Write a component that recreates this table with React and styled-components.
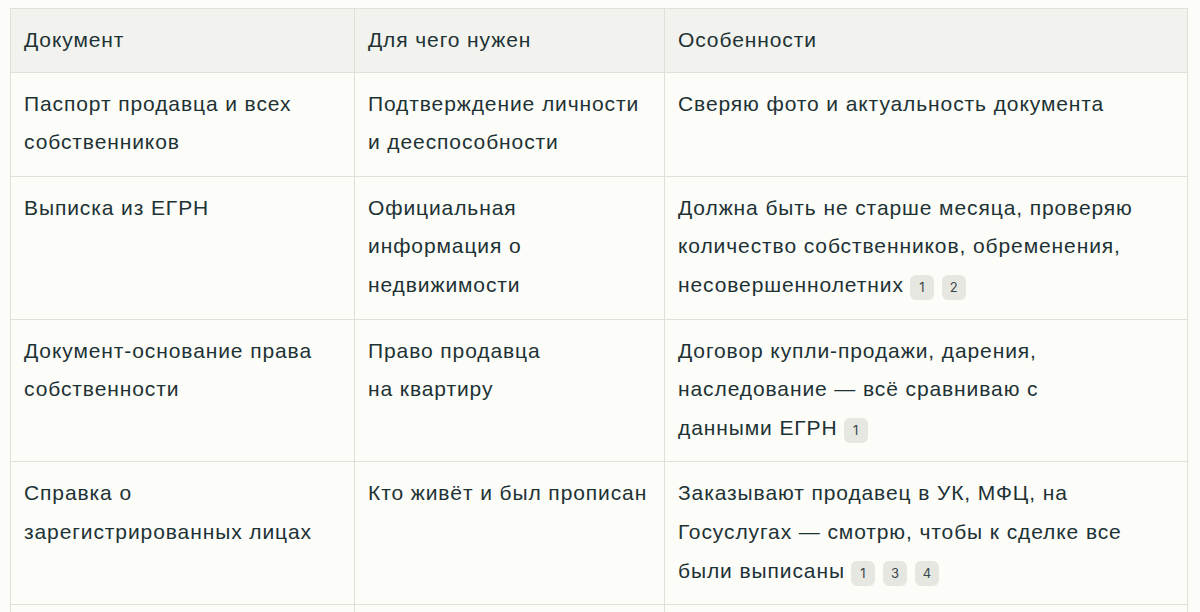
import styled, { createGlobalStyle } from "styled-components";

const rows = [
  {
    doc: "Паспорт продавца и всех собственников",
    why: "Подтверждение личности и дееспособности",
    note: "Сверяю фото и актуальность документа",
    tail: "",
    refs: [],
  },
  {
    doc: "Выписка из ЕГРН",
    why: "Официальная информация о недвижимости",
    note: "Должна быть не старше месяца, проверяю количество собственников, обременения, ",
    tail: "несовершеннолетних",
    refs: [1, 2],
  },
  {
    doc: "Документ-основание права собственности",
    why: (
      <>
        Право продавца
        <br />
        на квартиру
      </>
    ),
    note: "Договор купли-продажи, дарения, наследование — всё сравниваю с ",
    tail: "данными ЕГРН",
    refs: [1],
  },
  {
    doc: "Справка о зарегистрированных лицах",
    why: "Кто живёт и был прописан",
    note: "Заказывают продавец в УК, МФЦ, на Госуслугах — смотрю, чтобы к сделке все были ",
    tail: "выписаны",
    refs: [1, 3, 4],
  },
  {
    doc: "",
    why: "",
    note: "",
    tail: "",
    refs: [],
  },
];

const GlobalStyle = createGlobalStyle`
  body {
    margin: 0;
    padding: 8px 0 0 10px;
    background: #fcfcf8;
    font-family: "Liberation Sans", Arial, sans-serif;
  }
`;

export default function App() {
  return (
    <>
      <GlobalStyle />
      <Table>
        <colgroup>
          <col style={{ width: 344 }} />
          <col style={{ width: 310 }} />
          <col />
        </colgroup>
        <thead>
          <tr>
            <Th>Документ</Th>
            <Th>Для чего нужен</Th>
            <Th>Особенности</Th>
          </tr>
        </thead>
        <tbody>
          {rows.map((r, i) => (
            <tr key={i}>
              <Td>{r.doc}</Td>
              <Td>{r.why}</Td>
              <Td>
                {r.note}
                {r.tail && (
                  <NoWrap>
                    {r.tail}
                    {r.refs.map((n) => (
                      <Ref key={n}>{n}</Ref>
                    ))}
                  </NoWrap>
                )}
              </Td>
            </tr>
          ))}
        </tbody>
      </Table>
    </>
  );
}

const Table = styled.table`
  width: 1178px;
  border-collapse: collapse;
  table-layout: fixed;
  color: #1d3235;
  font-size: 21px;
  letter-spacing: 0.9px;
  line-height: 38.6px;
`;

const Th = styled.th`
  background: #f2f2ee;
  border: 1px solid #e0e0da;
  padding: 12px 13px 12px;
  text-align: left;
  font-weight: normal;
`;

const Td = styled.td`
  border: 1px solid #e0e0da;
  padding: 12px 13px 14px;
  vertical-align: top;
  height: 38px;
`;

const NoWrap = styled.span`
  white-space: nowrap;
`;

const Ref = styled.span`
  display: inline-block;
  margin-left: 6px;
  width: 24px;
  height: 25px;
  line-height: 25px;
  border-radius: 6px;
  background: #e7e7e2;
  color: #3a4648;
  font-family: Inter, "Liberation Sans", sans-serif;
  font-size: 13px;
  letter-spacing: 0;
  text-align: center;
  vertical-align: 0px;
  & + & {
    margin-left: 8px;
  }
`;
